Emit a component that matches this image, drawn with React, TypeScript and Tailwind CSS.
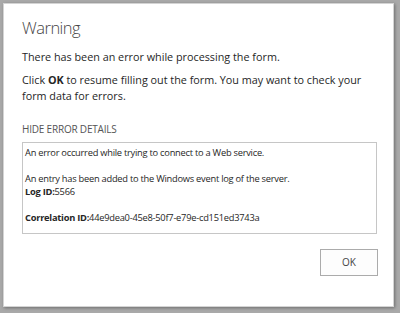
export default function App() {
  return (
    <div className="w-[400px] h-[313px] bg-[#a9a9a9] p-[3px] font-['Open_Sans','Noto_Sans',sans-serif]">
      {/* Dialog */}
      <div className="w-[391px] h-[304px] bg-white border border-[#d4d4d4] shadow-[1px_1px_3px_rgba(0,0,0,0.35)] flex flex-col pl-[18px] pr-[15px]">
        <h1 className="mt-[13px] text-[16.5px] leading-[22px] font-light text-[#444444] tracking-[-0.5px]">
          Warning
        </h1>
        <p className="mt-[10px] text-[10.8px] leading-[16px] text-[#262626]">
          There has been an error while processing the form.
        </p>
        <p className="mt-[7px] text-[10.8px] leading-[16px] text-[#262626]">
          Click <b className="font-bold">OK</b> to resume filling out the form. You may want to check your form data for errors.
        </p>

        {/* Error details */}
        <div className="mt-[18px] text-[10px] leading-[14px] text-[#555555] uppercase tracking-[-0.2px]">
          Hide error details
        </div>
        <div className="mt-[6px] w-[355px] h-[92px] border border-[#c6c6c6] px-[2px] pt-[3px] text-[9.3px] leading-[13px] text-[#262626] tracking-[-0.25px]">
          <div>An error occurred while trying to connect to a Web service.</div>
          <div className="h-[13px]" />
          <div>An entry has been added to the Windows event log of the server.</div>
          <div>
            <b className="font-bold">Log ID:</b>5566
          </div>
          <div className="h-[13px]" />
          <div>
            <b className="font-bold">Correlation ID:</b>44e9dea0-45e8-50f7-e79e-cd151ed3743a
          </div>
        </div>

        {/* Footer */}
        <div className="mt-[15px] flex justify-end">
          <button className="w-[58px] h-[27px] border border-[#ababab] bg-[#fdfdfd] text-[10px] text-[#444444]">
            OK
          </button>
        </div>
      </div>
    </div>
  );
}
